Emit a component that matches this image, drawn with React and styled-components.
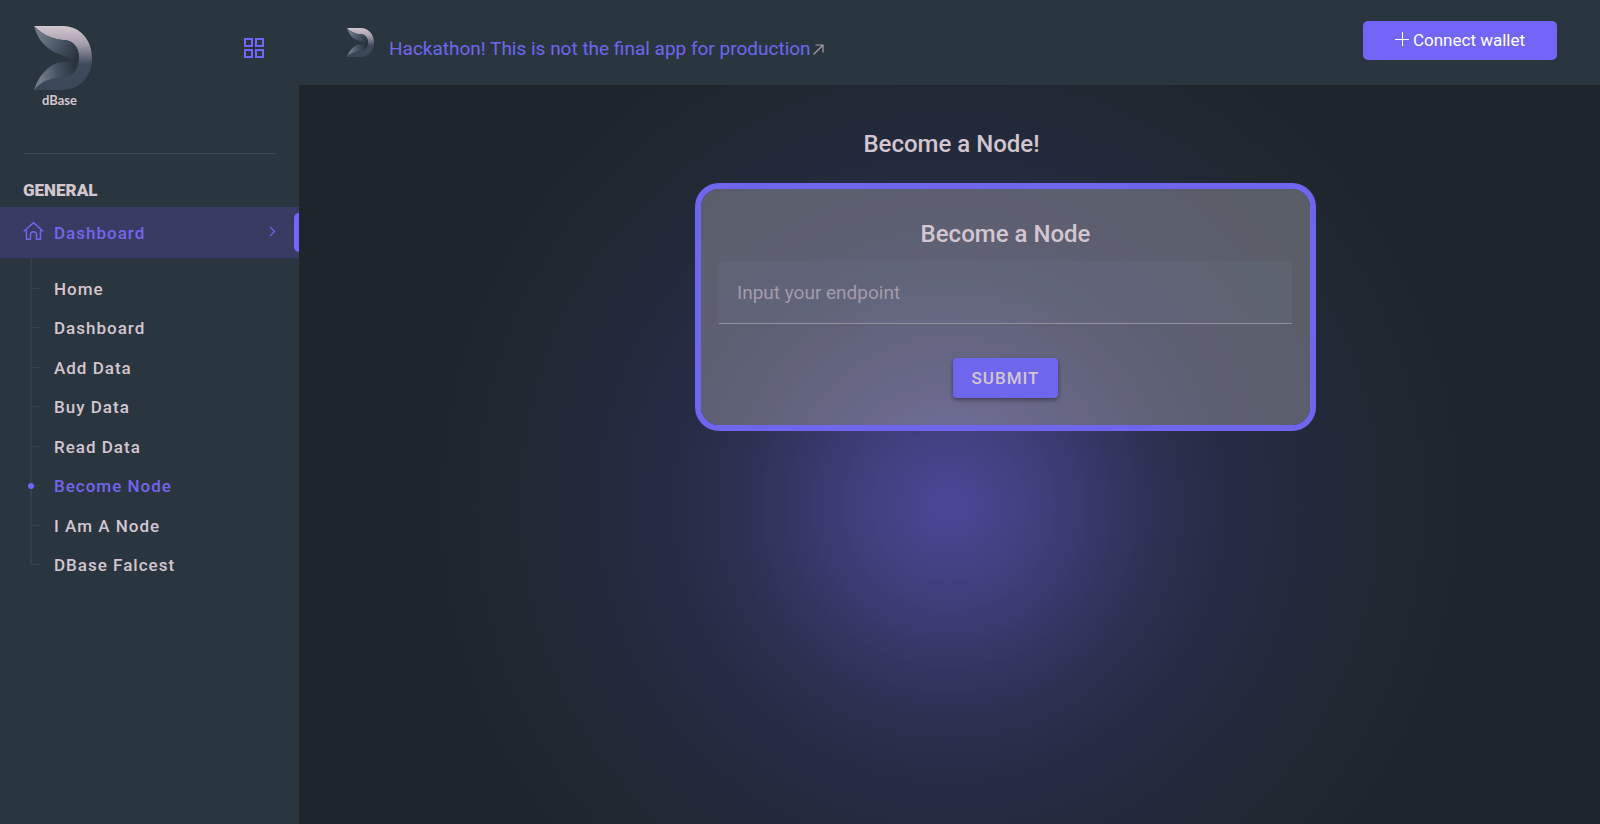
import React, { useState } from 'react';
import styled, { createGlobalStyle, css } from 'styled-components';

const GlobalStyle = createGlobalStyle`
  * {
    box-sizing: border-box;
  }
  body {
    margin: 0;
    background-color: #1e252b;
    color: #d3c6d0;
    font-family: Roboto, "Liberation Sans", sans-serif;
  }
  a {
    text-decoration: none;
    color: inherit;
  }
  button,
  input {
    font-family: inherit;
  }
`

const PageWrap = styled.div`
  display: flex;
  min-height: 100vh;
`

const Sidebar = styled.aside`
  flex: 0 0 299px;
  background-color: #2a363f;
`

const SidebarHead = styled.div`
  display: flex;
  justify-content: space-between;
  align-items: flex-start;
  height: 154px;
  margin: 0 23px;
  padding: 26px 12px 0 11px;
  border-bottom: 1px solid #3a4850;
`

const Brand = styled.a`
  display: flex;
  flex-direction: column;
  font-family: Lato, sans-serif;
  font-size: 13px;
  line-height: 20px;
  font-weight: bold;
`

const BrandName = styled.span`
  padding-left: 8px;
`

const IconButton = styled.button`
  display: flex;
  margin-top: 12px;
  padding: 0;
  border: none;
  background: none;
  color: #7366ff;
`

const SectionTitle = styled.h6`
  margin: 0;
  padding: 26px 23px 7px;
  font-size: 17px;
  line-height: 20px;
  font-weight: 900;
`

const MenuLink = styled.a`
  display: flex;
  align-items: center;
  height: 51px;
  padding-left: 23px;
  background-color: #393c62;
  color: #7366ee;
  font-size: 17px;
  font-weight: 500;
  letter-spacing: 1px;
`

const MenuLabel = styled.span`
  flex: 1;
  padding-left: 10px;
`

const ActiveBar = styled.span`
  width: 5px;
  height: 39px;
  margin-left: 18px;
  border-radius: 5px 0 0 5px;
  background-color: #7366ff;
`

const SubMenu = styled.ul`
  margin: 0;
  padding: 11px 0 20px 30px;
  list-style: none;
  background: linear-gradient(#323e48, #323e48) 30px 0 / 2px 11px no-repeat;
`

const tick = css`
  content: "";
  position: absolute;
  top: 19px;
  left: 0;
  width: 8px;
  height: 1px;
  background-color: #35424b;
`

const SubItem = styled.li`
  position: relative;
  height: ${({ $last }) => ($last ? '20px' : 'calc(276px / 7)')};
  border-left: 2px solid #323e48;
  &::before {
    ${tick}
  }
  ${({ $active }) => $active && css`
    &::after {
      content: "";
      position: absolute;
      top: 17px;
      left: -4px;
      width: 6px;
      height: 6px;
      border-radius: 50%;
      background-color: #7366ff;
    }
  `}
`

const SubLink = styled.a`
  display: block;
  padding-left: 22px;
  line-height: 40px;
  font-size: 17px;
  font-weight: 500;
  letter-spacing: 1px;
  color: ${({ $active }) => ($active ? '#7366ee' : '#d3c6d0')};
`

const Content = styled.div`
  display: flex;
  flex: 1;
  flex-direction: column;
  min-width: 0;
`

const TopBar = styled.header`
  display: flex;
  align-items: flex-start;
  justify-content: space-between;
  height: 85px;
  padding: 21px 43px 0 48px;
  background-color: #2a363f;
`

const Notice = styled.div`
  display: flex;
  align-items: flex-start;
  padding-top: 7px;
`

const NoticeLink = styled.a`
  display: flex;
  align-items: center;
  gap: 2px;
  padding: 10px 0 0 15px;
  line-height: 22px;
  font-size: 19px;
  color: #6f66ee;
`

const ConnectButton = styled.button`
  display: flex;
  align-items: center;
  justify-content: center;
  gap: 4px;
  width: 194px;
  height: 39px;
  padding: 0 0 2px;
  border: none;
  border-radius: 5px;
  background-color: #7366f6;
  color: white;
  font-size: 17px;
`

const Main = styled.main`
  flex: 1;
  padding: 45px 0 0;
  background: radial-gradient(circle at 50% 420px, #4a4897 0, #403f7c 90px, #343663 160px, #2b304f 220px, #272c47 265px, #232a3c 350px, #202832 440px, #1e252b 530px);
`

const PageTitle = styled.h1`
  margin: 0;
  padding-left: 4px;
  text-align: center;
  font-size: 24px;
  line-height: 28px;
  font-weight: 500;
`

const FormSection = styled.section`
  display: flex;
  justify-content: center;
  padding: 25px 0 0 112px;
`

const NodeForm = styled.form`
  display: flex;
  flex-direction: column;
  align-items: center;
  width: 621px;
  max-width: 100%;
  padding: 31px 18px 27px;
  border: 6px solid #6f66ee;
  border-radius: 24px;
  background: rgba(162, 160, 168, 0.45);
  background-clip: padding-box;
`

const FormTitle = styled.h2`
  margin: 0 0 13px;
  font-size: 24px;
  line-height: 28px;
  font-weight: 500;
`

const EndpointInput = styled.input`
  width: 100%;
  height: 63px;
  padding: 0 18px;
  border: none;
  border-bottom: 1px solid #948f9d;
  border-radius: 5px 5px 0 0;
  outline: none;
  background-color: rgba(115, 125, 145, 0.15);
  color: #d3c6d0;
  font-size: 19px;
  &::placeholder {
    color: #a29cac;
    opacity: 1;
  }
`

const SubmitButton = styled.button`
  height: 40px;
  margin-top: 34px;
  padding: 0 19px;
  border: none;
  border-radius: 4px;
  background-color: #6f66ee;
  color: #d3c6d0;
  font-size: 17px;
  font-weight: 500;
  letter-spacing: 1px;
  box-shadow: 0 2px 4px rgba(0, 0, 0, 0.4);
`

const menus = ['Home', 'Dashboard', 'Add Data', 'Buy Data', 'Read Data', 'Become Node', 'I Am A Node', 'DBase Falcest'];

function Logo({ id, width, height }) {
  return (
    <svg width={width} height={height} viewBox="0 0 58 64" preserveAspectRatio="none" aria-hidden="true">
      <defs>
        <linearGradient id={`${id}-body`} x1="0" y1="0" x2="0" y2="1">
          <stop offset="0" stopColor="#d3c6d0" />
          <stop offset="0.28" stopColor="#a59fac" />
          <stop offset="0.6" stopColor="#3f4a5b" />
          <stop offset="1" stopColor="#3a4756" />
        </linearGradient>
        <linearGradient id={`${id}-leaf`} gradientUnits="userSpaceOnUse" x1="5" y1="12" x2="42" y2="34">
          <stop offset="0" stopColor="#6d7884" />
          <stop offset="0.5" stopColor="#465463" />
          <stop offset="1" stopColor="#27323b" />
        </linearGradient>
        <linearGradient id={`${id}-low`} gradientUnits="userSpaceOnUse" x1="6" y1="50" x2="40" y2="42">
          <stop offset="0" stopColor="#737d88" />
          <stop offset="0.5" stopColor="#465361" />
          <stop offset="1" stopColor="#2a363f" />
        </linearGradient>
      </defs>
      <path d="M0 0H29C46 0 58 14 58 32S46 64 29 64H0C8 54 18 52 29 51C40 50 45 42 45 32C45 21 39 14 29 14C17 13 8 8 0 0Z" fill={`url(#${id}-body)`} />
      <path d="M0 0C8 8 17 13 29 14C39 14 45 21 45 32C45 36 43 38 41 38C39 32 29 30 20 26C9 20 3 11 0 0Z" fill={`url(#${id}-leaf)`} />
      <path d="M0 64C5 49 16 36 30 36C37 35 41 37 44 38C42 46 38 50 29 51C18 52 8 54 0 64Z" fill={`url(#${id}-low)`} />
    </svg>
  )
}

export default function App() {
  const [endpoint, setEndpoint] = useState('');
  const active = 'Become Node';

  return (
    <PageWrap>
      <GlobalStyle />
      <Sidebar>
        <SidebarHead>
          <Brand href="#home">
            <Logo id="brand" width="58" height="64" />
            <BrandName>dBase</BrandName>
          </Brand>
          <IconButton type="button" aria-label="Toggle sidebar">
            <svg width="20" height="20" viewBox="0 0 20 20" fill="none" stroke="currentColor" strokeWidth="2">
              <path d="M1 1h7v7H1zM12 1h7v7h-7zM1 12h7v7H1zM12 12h7v7h-7z" />
            </svg>
          </IconButton>
        </SidebarHead>
        <SectionTitle>GENERAL</SectionTitle>
        <MenuLink href="#dashboard">
          <svg width="21" height="24" viewBox="0 0 21 24" fill="none" stroke="currentColor" strokeWidth="1.4">
            <path d="M.7 10.5L10.5 1.7l9.8 8.8M3.5 9v9.3h4v-4.5a3 3 0 0 1 6 0v4.5h4V9" />
          </svg>
          <MenuLabel>Dashboard</MenuLabel>
          <svg width="7" height="13" viewBox="0 0 7 13" fill="none" stroke="currentColor" strokeWidth="1.3">
            <path d="M1 1l4.5 4.5L1 10" />
          </svg>
          <ActiveBar />
        </MenuLink>
        <SubMenu>
          {menus.map((menu, idx) => (
            <SubItem key={menu} $active={menu === active} $last={idx === menus.length - 1}>
              <SubLink href="#menu" $active={menu === active}>{menu}</SubLink>
            </SubItem>
          ))}
        </SubMenu>
      </Sidebar>
      <Content>
        <TopBar>
          <Notice>
            <Logo id="notice" width="27" height="29" />
            <NoticeLink href="#notice">
              Hackathon! This is not the final app for production
              <svg width="11" height="11" viewBox="0 0 11 11" fill="none" stroke="#aaa2ac" strokeWidth="1.2">
                <path d="M.5 10.5L10 1M2.5 1H10v7.5" />
              </svg>
            </NoticeLink>
          </Notice>
          <ConnectButton type="button">
            <svg width="14" height="16" viewBox="0 0 14 16" stroke="currentColor">
              <path d="M7.5 0v14M0 7.5h14" />
            </svg>
            Connect wallet
          </ConnectButton>
        </TopBar>
        <Main>
          <PageTitle>Become a Node!</PageTitle>
          <FormSection>
            <NodeForm onSubmit={(e) => e.preventDefault()}>
              <FormTitle>Become a Node</FormTitle>
              <EndpointInput
                type="text"
                aria-label="Input your endpoint"
                placeholder="Input your endpoint"
                value={endpoint}
                onChange={(e) => setEndpoint(e.target.value)}
              />
              <SubmitButton type="submit">SUBMIT</SubmitButton>
            </NodeForm>
          </FormSection>
        </Main>
      </Content>
    </PageWrap>
  )
}
